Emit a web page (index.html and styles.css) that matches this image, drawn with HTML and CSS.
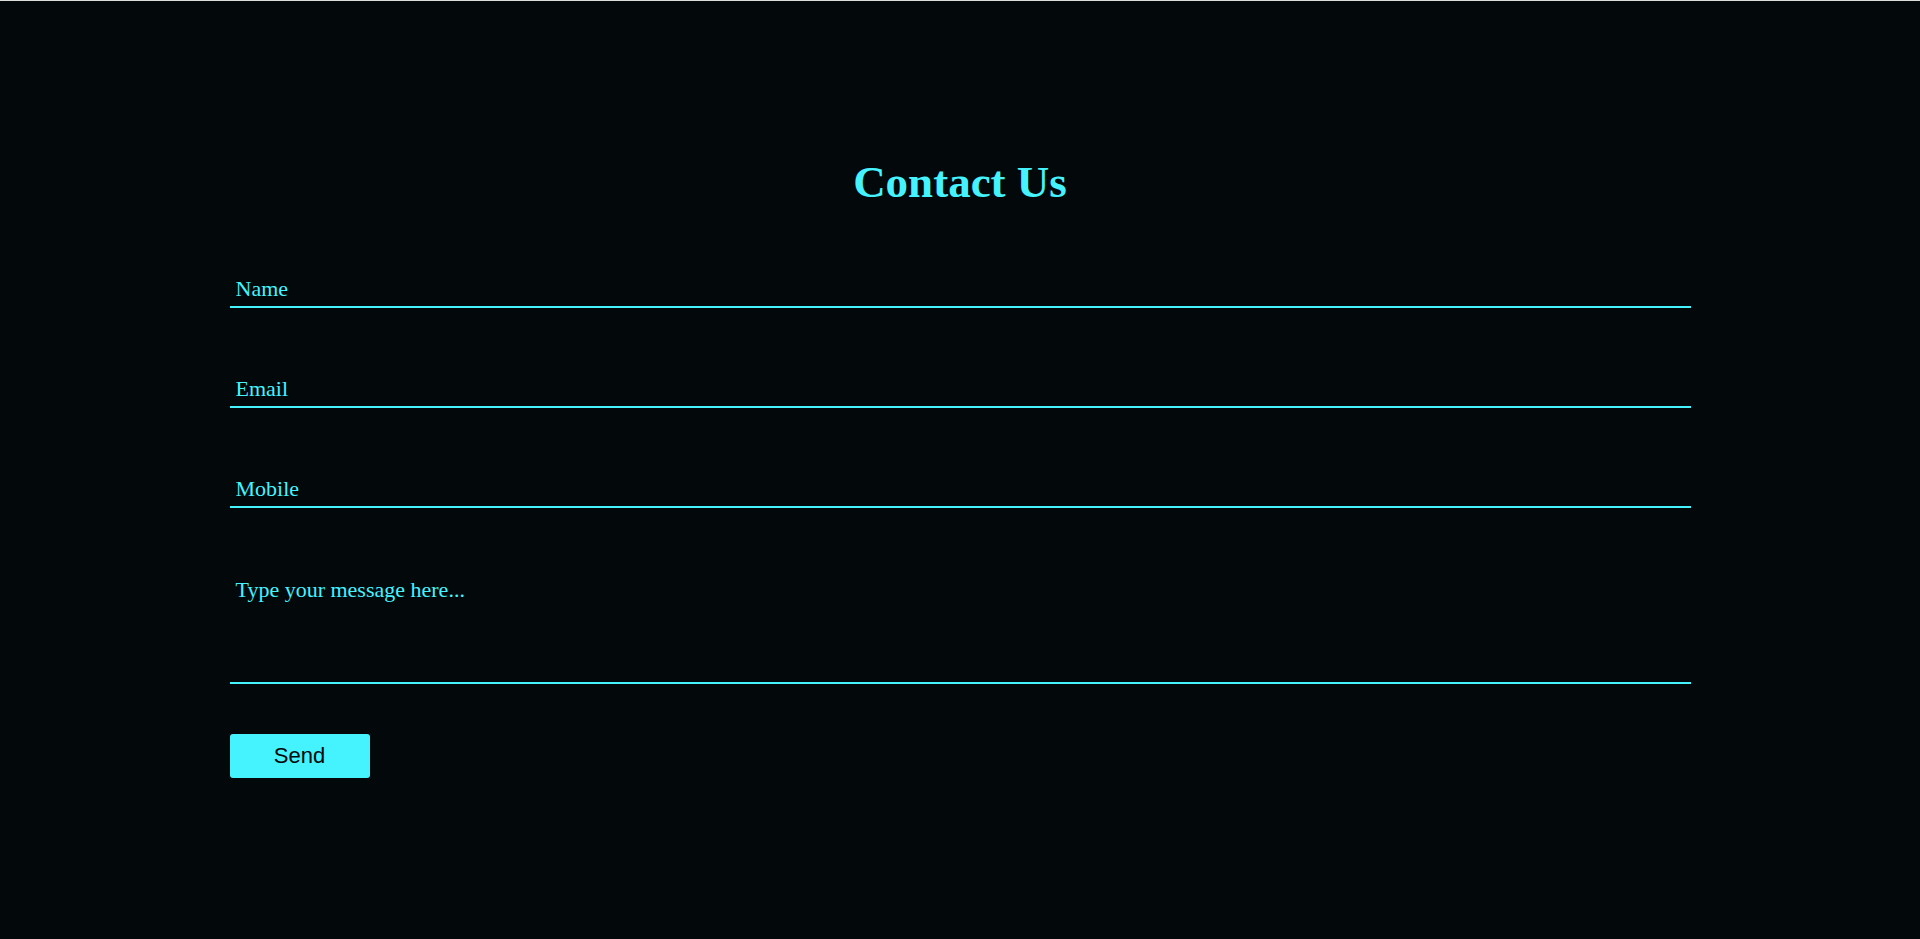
FILE: index.html
```html
<!DOCTYPE html>
<html lang="en">
<head>
<meta charset="utf-8">
<title>Contact Us</title>
<link rel="stylesheet" href="styles.css">
</head>
<body>
<main class="page">
  <section class="contact">
    <h1 class="contact-title">Contact Us</h1>
    <form class="contact-form">
      <input class="field" type="text" placeholder="Name">
      <input class="field" type="email" placeholder="Email">
      <input class="field" type="tel" placeholder="Mobile">
      <textarea class="field field-message" placeholder="Type your message here..."></textarea>
      <button class="send-btn" type="button">Send</button>
    </form>
  </section>
</main>
</body>
</html>
```
FILE: styles.css
```css
html, body {
  margin: 0;
  padding: 0;
  background: #03080b;
}

.page {
  min-height: 938px;
  border-top: 1px solid #dcdcdc;
  background: #03080b;
  font-family: "Liberation Serif", "Times New Roman", serif;
}

.contact {
  width: 1461px;
  margin: 0 auto;
  padding-top: 153px;
}

.contact-title {
  margin: 0;
  text-align: center;
  font-family: "Liberation Serif", "Times New Roman", serif;
  font-weight: 700;
  font-size: 45px;
  line-height: 56px;
  color: #45f3ff;
}

.contact-form {
  display: flex;
  flex-direction: column;
  align-items: flex-start;
  margin-top: 66px;
}

.field {
  display: block;
  width: 100%;
  box-sizing: border-box;
  height: 32px;
  margin: 0 0 68px;
  padding: 0 6px 4px;
  background: transparent;
  border: none;
  border-bottom: 2px solid #45f3ff;
  border-radius: 0;
  outline: none;
  font-family: "Liberation Serif", "Times New Roman", serif;
  font-size: 22px;
  color: #45f3ff;
}

.field::placeholder {
  color: #45f3ff;
  opacity: 1;
}

.field-message {
  height: 108px;
  padding: 1px 6px 0;
  margin-bottom: 50px;
  resize: none;
  line-height: normal;
}

.send-btn {
  width: 140px;
  height: 44px;
  padding: 0;
  border: none;
  border-radius: 3px;
  background: #45f3ff;
  color: #03080b;
  font-family: "Liberation Sans", Arial, sans-serif;
  font-size: 22px;
  cursor: pointer;
}
```
